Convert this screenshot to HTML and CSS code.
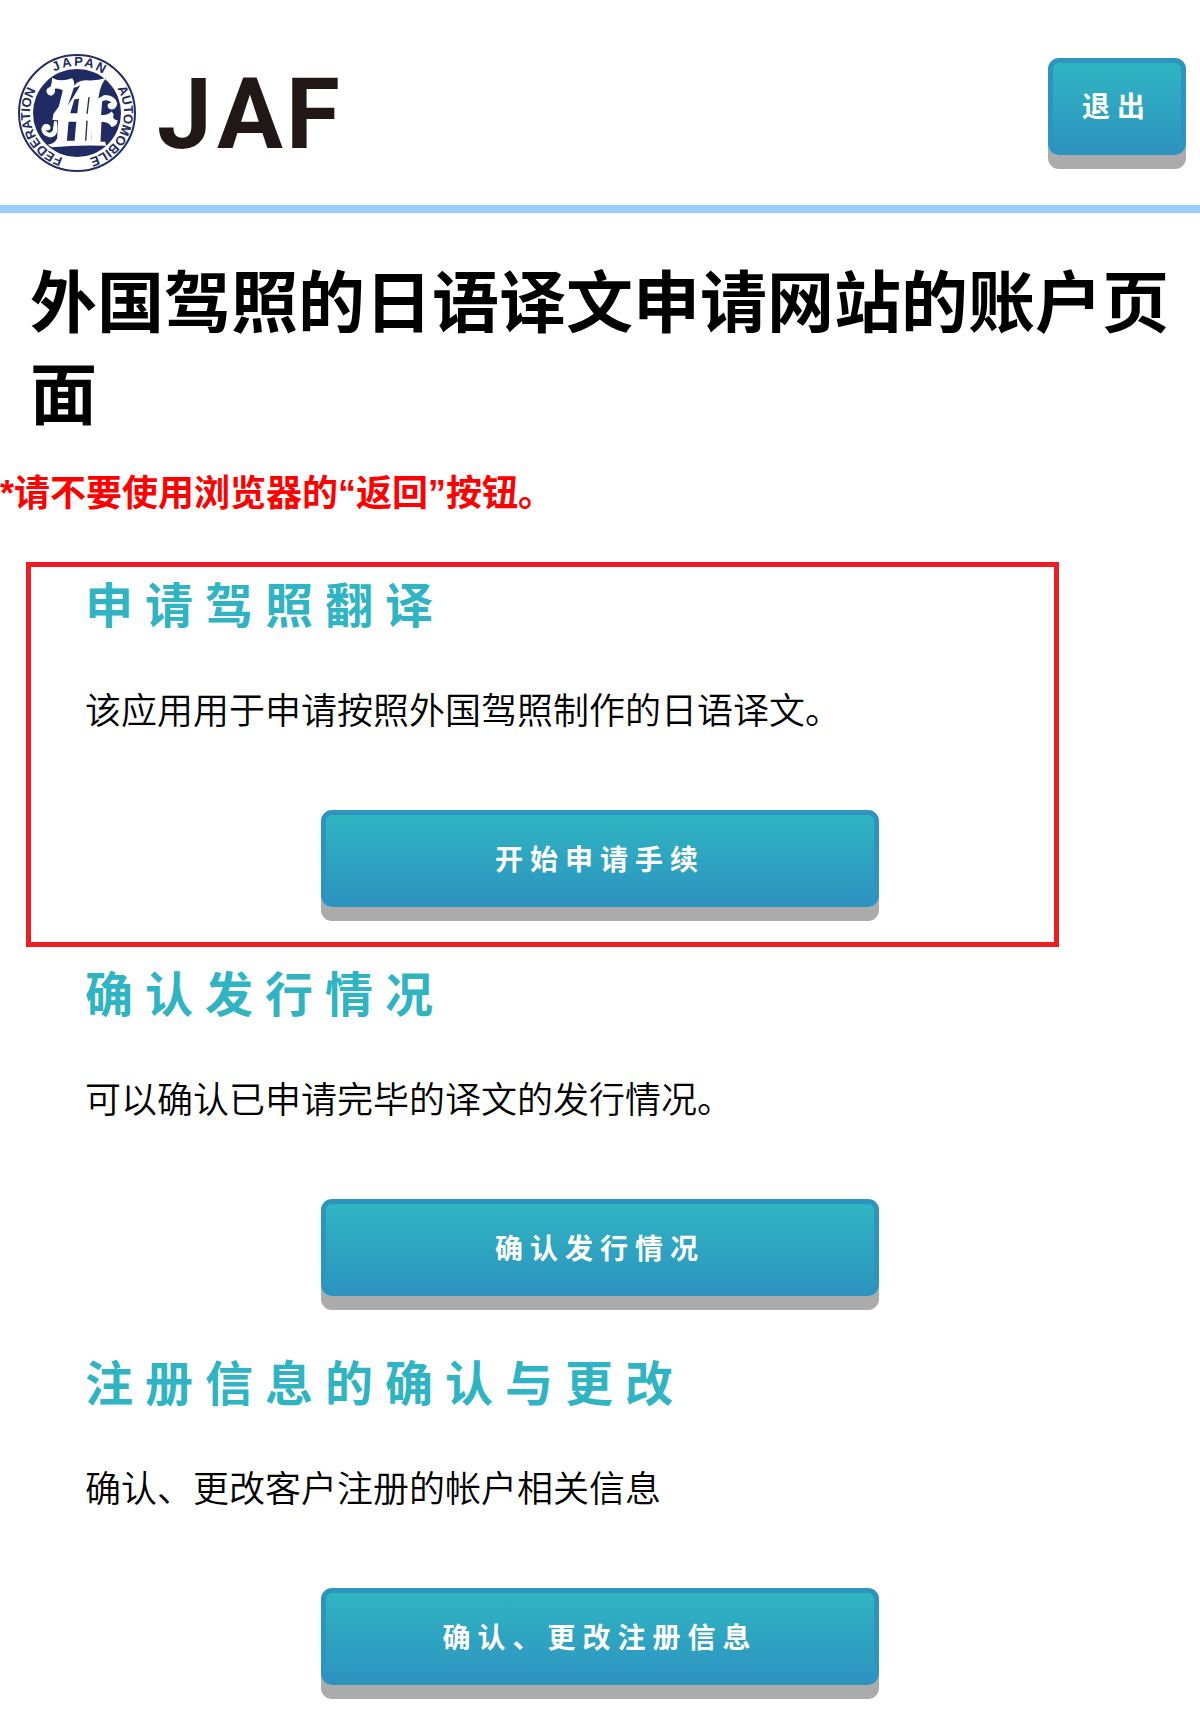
FILE: index.html
```
<!DOCTYPE html>
<html lang="zh-CN">
<head>
    <meta charset="UTF-8">
    <meta name="viewport" content="width=device-width, initial-scale=1">
    <title>外国驾照的日语译文申请网站的账户页面</title>
    <link rel="stylesheet" href="styles.css">
</head>
<body>
    <header class="header">
        <svg class="logo" width="330" height="118" viewBox="0 0 330 118" role="img" aria-label="JAF">
            <defs>
                <path id="ring" d="M59 106 A47 47 0 0 1 59 12 A47 47 0 0 1 59 106"/>
                <path id="ringTop" d="M12 59 A47 47 0 0 1 106 59 A47 47 0 0 1 12 59"/>
            </defs>
            <circle cx="59" cy="59" r="58" fill="#fff" stroke="#232c63" stroke-width="2"/>
            <circle cx="59" cy="59" r="44" fill="#202b63"/>
            <g class="ring-text">
                <text class="ring-top"><textPath href="#ringTop" startOffset="26%">JAPAN</textPath></text>
                <text><textPath href="#ringTop" startOffset="56%">AUTOMOBILE</textPath></text>
                <text><textPath href="#ring" startOffset="19%">FEDERATION</textPath></text>
            </g>
            <!-- emblem monogram -->
            <g transform="translate(-19 -14) scale(.336)" fill="#fff">
                <path d="M158 112 Q180 126 218 114 Q229 128 220 150 L205 195 L222 168 L242 135 Q230 143 219 142 Q234 119 260 120 Q292 122 319 113 Q306 128 300 151 L287 218 L281 218 L274 302 L316 303 L319 315 Q240 311 158 319 L145 312 Q165 309 173 293 L176 239 L159 238 L162 220 L178 198 L190 150 Q180 143 166 145 Q170 160 156 166 Q142 164 141 151 Q143 142 153 140 Q158 127 158 112Z"/>
                <path d="M270 174 Q290 181 313 164 Q347 164 352 190 Q348 207 337 207 Q324 207 323 195 Q324 187 335 187 Q325 174 307 182 L304 223 Q324 225 335 213 L341 220 Q336 237 353 239 Q352 257 335 259 Q329 244 305 243 L302 306 L274 306 L279 205Z"/>
                <path d="M172 242 Q181 288 153 290 Q127 286 126 265 Q129 248 144 250 Q155 254 153 264 Q148 272 138 268 Q149 283 160 269 L164 242Z"/>
                <path d="M207 243 L230 243 L225 300 L202 300Z M224 177 L238 174 L233 218 L212 218Z" fill="#202b63"/>
                <path d="M268 170 L262 220 M262 240 L258 300" fill="none" stroke="#202b63" stroke-width="4"/>
            </g>
            <text class="logo-text" x="139 199 268" y="94">JAF</text>
        </svg>
        <button type="button" class="btn">退出</button>
    </header>

    <main>
        <h1>外国驾照的日语译文申请网站的账户页面</h1>
        <p class="warning">*请不要使用浏览器的“返回”按钮。</p>

        <div class="menu">
            <section class="menu-item marked">
                <h2>申请驾照翻译</h2>
                <p>该应用用于申请按照外国驾照制作的日语译文。</p>
                <button type="button" class="btn btn-wide">开始申请手续</button>
            </section>
            <section class="menu-item">
                <h2>确认发行情况</h2>
                <p>可以确认已申请完毕的译文的发行情况。</p>
                <button type="button" class="btn btn-wide">确认发行情况</button>
            </section>
            <section class="menu-item">
                <h2>注册信息的确认与更改</h2>
                <p>确认、更改客户注册的帐户相关信息</p>
                <button type="button" class="btn btn-wide">确认、更改注册信息</button>
            </section>
        </div>
    </main>
</body>
</html>
```
FILE: styles.css
```
* {
    box-sizing: border-box;
}
body {
    margin: 0;
    background-color: #fff;
    color: #000;
    font-family: "Liberation Sans", "Noto Sans CJK SC", sans-serif;
    font-size: 36px;
}
h1, h2, p {
    margin: 0;
}

.header {
    display: flex;
    align-items: center;
    justify-content: space-between;
    padding: 54px 14px 33px 18px;
    border-bottom: 8px solid #96ccff;
}
.ring-text {
    font-family: "Liberation Sans", sans-serif;
    font-size: 13px;
    font-weight: bold;
    fill: #202b63;
    text-anchor: middle;
}
.ring-top {
    letter-spacing: 2px;
}
.logo-text {
    font-family: Roboto, sans-serif;
    font-size: 98px;
    font-weight: bold;
    fill: #211816;
}

h1 {
    padding: 45px 30px 0;
    font-size: 67px;
    line-height: 92px;
}
.warning {
    margin-top: 25px;
    color: #f00;
    font-weight: bold;
    line-height: 54px;
}

.menu {
    display: flex;
    flex-direction: column;
    gap: 39px;
    padding: 50px 85px 34px;
}
.menu-item {
    position: relative;
    display: flex;
    flex-direction: column;
}
.menu-item h2 {
    color: #2fb4c3;
    font-size: 48px;
    line-height: 72px;
    letter-spacing: 12px;
}
.menu-item p {
    margin: 42px 0 71px;
    font-weight: 350;
    line-height: 54px;
}
/* red frame drawn over the section */
.marked::after {
    content: "";
    position: absolute;
    top: -9px;
    right: 56px;
    bottom: -26px;
    left: -59px;
    border: 5px solid #f01c24;
    pointer-events: none;
}

.btn {
    height: 97px;
    margin: 0 0 14px;
    padding: 0 29px 2px;
    border: 5px solid #2d94c0;
    border-radius: 11px;
    background: linear-gradient(#2fb5c2, #2d94c0) padding-box border-box;
    box-shadow: 0 14px 0 #ababab;
    color: #fff;
    font-family: inherit;
    font-size: 28px;
    font-weight: bold;
    letter-spacing: 7px;
    cursor: pointer;
}
.btn:active {
    box-shadow: 0 7px 0 #ababab;
}
.btn-wide {
    align-self: center;
    width: 100%;
    max-width: 558px;
}
```
